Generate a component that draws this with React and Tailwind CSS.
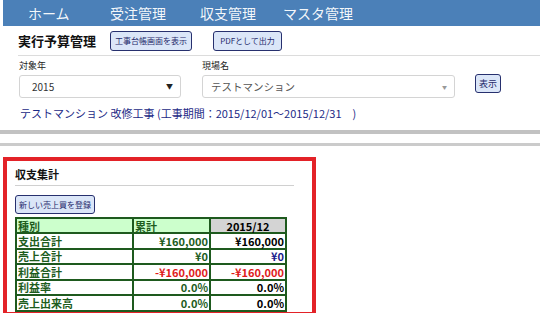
import React from 'react';

const font = { fontFamily: '"Noto Sans CJK JP", "Noto Sans", sans-serif' };

const navItems = [
  { label: 'ホーム', w: 'w-[82px]' },
  { label: '受注管理', w: 'w-[90px]' },
  { label: '収支管理', w: 'w-[83px]' },
  { label: 'マスタ管理', w: 'w-[90px]' },
];

const rows = [
  { name: '支出合計', total: '¥160,000', totalCls: 'text-[#1d5c1d]', month: '¥160,000', monthCls: 'text-black' },
  { name: '売上合計', total: '¥0', totalCls: 'text-[#1d5c1d]', month: '¥0', monthCls: 'text-[#1a1a8c]' },
  { name: '利益合計', total: '-¥160,000', totalCls: 'text-[#e01b1b]', month: '-¥160,000', monthCls: 'text-[#e01b1b]' },
  { name: '利益率', total: '0.0%', totalCls: 'text-[#1d5c1d]', month: '0.0%', monthCls: 'text-black' },
  { name: '売上出来高', total: '0.0%', totalCls: 'text-[#1d5c1d]', month: '0.0%', monthCls: 'text-black' },
];

const SmallButton = ({ children, className = '' }) => (
  <button
    className={`rounded-[3px] border border-[#27306e] bg-[#dbe6f8] leading-none whitespace-nowrap text-[#1f2a6b] px-0 ${className}`}
  >
    {children}
  </button>
);

const cell = 'border-2 border-[#1e5a1e] px-[1px] py-0 leading-[12px]';

const App = () => {
  return (
    <div className="w-[540px] h-[313px] overflow-hidden bg-white pl-[3px]" style={font}>
      {/* Nav */}
      <nav className="h-[26px] bg-[#4b80b8] flex items-center pl-[25px]">
        {navItems.map((n) => (
          <span key={n.label} className={`${n.w} text-[14px] text-white/95 leading-none`}>
            {n.label}
          </span>
        ))}
      </nav>

      {/* Title row */}
      <div className="flex items-center h-[29px] pl-[15px] pt-[1px]">
        <h1 className="text-[13px] font-bold text-[#111] w-[92px]">実行予算管理</h1>
        <SmallButton className="w-[82px] h-[20px] text-[8px]">工事台帳画面を表示</SmallButton>
        <SmallButton className="ml-[21px] w-[69px] h-[20px] text-[8px]">PDFとして出力</SmallButton>
      </div>
      <div className="ml-[15px] h-px bg-[#dcdcdc]" />

      {/* Filters */}
      <div className="flex items-end pl-[16px] pt-[4px]">
        <div className="flex flex-col">
          <label className="text-[9px] text-[#222] leading-[12px] h-[12px]">対象年</label>
          <div className="mt-[3px] w-[162px] h-[23px] rounded-[3px] border border-[#d4d4d4] flex items-center justify-between pl-[12px] pr-[7px]">
            <span className="text-[10px] text-[#333]">2015</span>
            <span className="text-[7px] text-[#222]">▼</span>
          </div>
        </div>
        <div className="flex flex-col ml-[21px]">
          <label className="text-[9px] text-[#222] leading-[12px] h-[12px]">現場名</label>
          <div className="mt-[3px] w-[253px] h-[23px] rounded-[3px] border border-[#d4d4d4] flex items-center justify-between pl-[8px] pr-[7px]">
            <span className="text-[10.5px] text-[#555]">テストマンション</span>
            <span className="text-[5px] text-[#999]">▼</span>
          </div>
        </div>
        <SmallButton className="ml-[20px] mb-[5px] w-[26px] h-[19px] text-[9px]">表示</SmallButton>
      </div>

      <p className="pl-[17px] mt-[7px] text-[11px] text-[#1c2a86] leading-[16px]">
        テストマンション 改修工事 (工事期間：2015/12/01～2015/12/31　)
      </p>

      {/* Separators */}
      <div className="-ml-[3px] mt-[9px] h-[4px] bg-[#c2c2c2]" />
      <div className="-ml-[3px] mt-[9px] h-[3px] bg-[#cbcbcb]" />

      {/* Summary box */}
      <section className="mt-[11px] w-[313px] border-[4px] border-[#e32228] pl-[8px] pt-[6px]">
        <h2 className="text-[11px] font-bold text-[#111] leading-[14px]">収支集計</h2>
        <div className="mt-[4px] mr-[18px] h-px bg-[#d0d0d0]" />
        <SmallButton className="mt-[9px] w-[80px] h-[19px] text-[8px]">新しい売上買を登録</SmallButton>
        <table className="mt-[3px] w-[272px] border-collapse text-[11px] font-bold">
          <thead>
            <tr>
              <th className={`${cell} h-[15px] w-[117px] bg-[#ccffcc] text-left text-[#1d5c1d]`}>種別</th>
              <th className={`${cell} h-[15px] w-[77px] bg-[#ccffcc] text-left text-[#1d5c1d]`}>累計</th>
              <th className={`${cell} h-[15px] bg-[#d4d4d4] text-center text-black`}>2015/12</th>
            </tr>
          </thead>
          <tbody>
            {rows.map((r) => (
              <tr key={r.name}>
                <td className={`${cell} h-[15.5px] text-[#1d5c1d]`}>{r.name}</td>
                <td className={`${cell} h-[15.5px] text-right ${r.totalCls}`}>{r.total}</td>
                <td className={`${cell} h-[15.5px] text-right ${r.monthCls}`}>{r.month}</td>
              </tr>
            ))}
          </tbody>
        </table>
      </section>
    </div>
  );
};

export default App;
